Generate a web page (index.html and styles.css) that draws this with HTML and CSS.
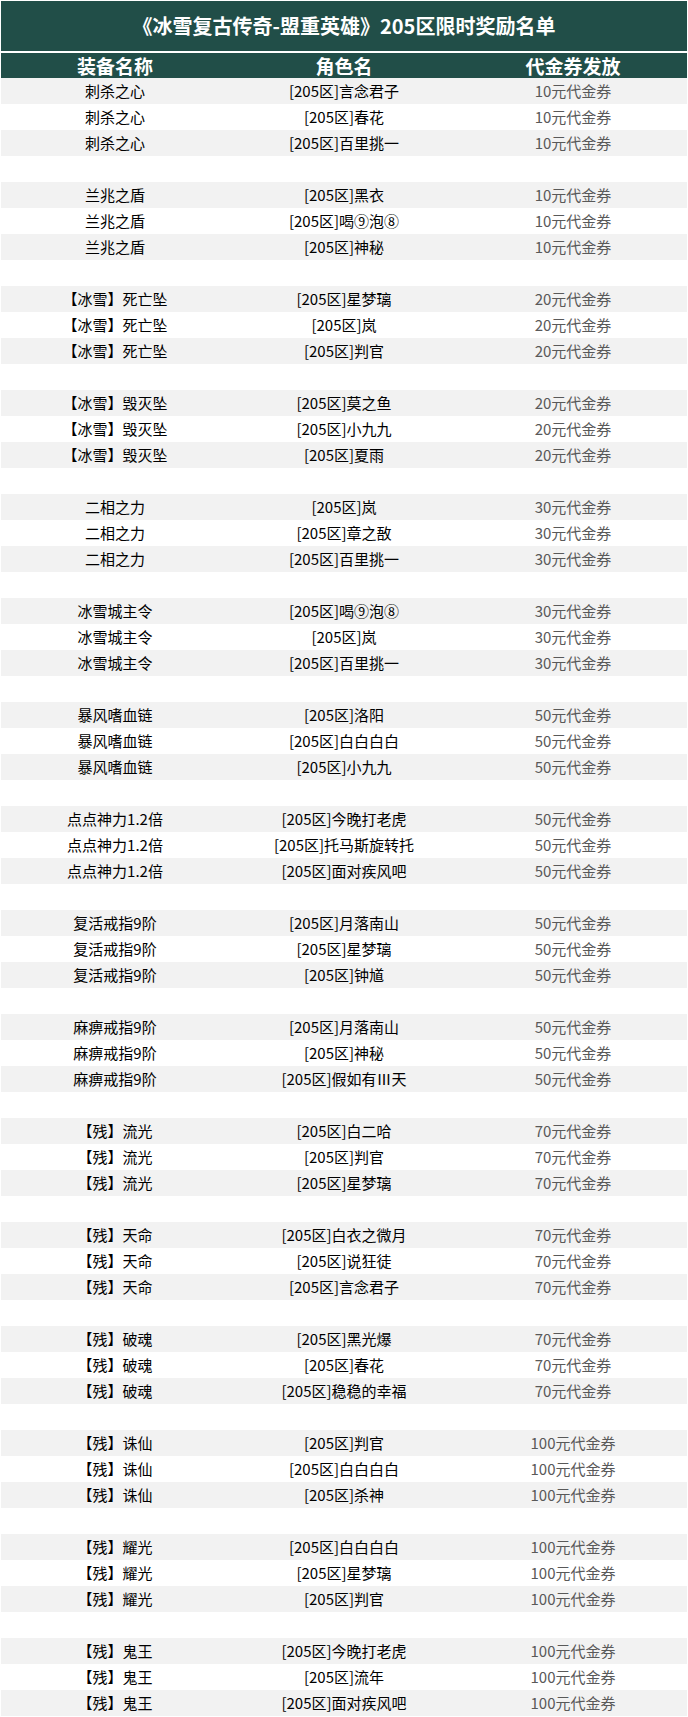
FILE: index.html
```html
<!DOCTYPE html>
<html lang="zh-CN">
<head>
<meta charset="utf-8">
<title>205区限时奖励名单</title>
<link rel="stylesheet" href="styles.css">
</head>
<body>
<div class="sheet">
  <div class="title">《冰雪复古传奇-盟重英雄》205区限时奖励名单</div>
  <table class="list">
    <colgroup><col class="c1"><col class="c2"><col class="c3"></colgroup>
    <thead>
      <tr><th>装备名称</th><th>角色名</th><th>代金券发放</th></tr>
    </thead>
    <tbody>
      <tr><td class="item">刺杀之心</td><td class="role">[205区]言念君子</td><td class="prize">10元代金券</td></tr>
      <tr><td class="item">刺杀之心</td><td class="role">[205区]春花</td><td class="prize">10元代金券</td></tr>
      <tr><td class="item">刺杀之心</td><td class="role">[205区]百里挑一</td><td class="prize">10元代金券</td></tr>
      <tr class="gap"><td colspan="3"></td></tr>
      <tr><td class="item">兰兆之盾</td><td class="role">[205区]黑衣</td><td class="prize">10元代金券</td></tr>
      <tr><td class="item">兰兆之盾</td><td class="role">[205区]喝⑨泡⑧</td><td class="prize">10元代金券</td></tr>
      <tr><td class="item">兰兆之盾</td><td class="role">[205区]神秘</td><td class="prize">10元代金券</td></tr>
      <tr class="gap"><td colspan="3"></td></tr>
      <tr><td class="item">【冰雪】死亡坠</td><td class="role">[205区]星梦璃</td><td class="prize">20元代金券</td></tr>
      <tr><td class="item">【冰雪】死亡坠</td><td class="role">[205区]岚</td><td class="prize">20元代金券</td></tr>
      <tr><td class="item">【冰雪】死亡坠</td><td class="role">[205区]判官</td><td class="prize">20元代金券</td></tr>
      <tr class="gap"><td colspan="3"></td></tr>
      <tr><td class="item">【冰雪】毁灭坠</td><td class="role">[205区]莫之鱼</td><td class="prize">20元代金券</td></tr>
      <tr><td class="item">【冰雪】毁灭坠</td><td class="role">[205区]小九九</td><td class="prize">20元代金券</td></tr>
      <tr><td class="item">【冰雪】毁灭坠</td><td class="role">[205区]夏雨</td><td class="prize">20元代金券</td></tr>
      <tr class="gap"><td colspan="3"></td></tr>
      <tr><td class="item">二相之力</td><td class="role">[205区]岚</td><td class="prize">30元代金券</td></tr>
      <tr><td class="item">二相之力</td><td class="role">[205区]章之敔</td><td class="prize">30元代金券</td></tr>
      <tr><td class="item">二相之力</td><td class="role">[205区]百里挑一</td><td class="prize">30元代金券</td></tr>
      <tr class="gap"><td colspan="3"></td></tr>
      <tr><td class="item">冰雪城主令</td><td class="role">[205区]喝⑨泡⑧</td><td class="prize">30元代金券</td></tr>
      <tr><td class="item">冰雪城主令</td><td class="role">[205区]岚</td><td class="prize">30元代金券</td></tr>
      <tr><td class="item">冰雪城主令</td><td class="role">[205区]百里挑一</td><td class="prize">30元代金券</td></tr>
      <tr class="gap"><td colspan="3"></td></tr>
      <tr><td class="item">暴风嗜血链</td><td class="role">[205区]洛阳</td><td class="prize">50元代金券</td></tr>
      <tr><td class="item">暴风嗜血链</td><td class="role">[205区]白白白白</td><td class="prize">50元代金券</td></tr>
      <tr><td class="item">暴风嗜血链</td><td class="role">[205区]小九九</td><td class="prize">50元代金券</td></tr>
      <tr class="gap"><td colspan="3"></td></tr>
      <tr><td class="item">点点神力1.2倍</td><td class="role">[205区]今晚打老虎</td><td class="prize">50元代金券</td></tr>
      <tr><td class="item">点点神力1.2倍</td><td class="role">[205区]托马斯旋转托</td><td class="prize">50元代金券</td></tr>
      <tr><td class="item">点点神力1.2倍</td><td class="role">[205区]面对疾风吧</td><td class="prize">50元代金券</td></tr>
      <tr class="gap"><td colspan="3"></td></tr>
      <tr><td class="item">复活戒指9阶</td><td class="role">[205区]月落南山</td><td class="prize">50元代金券</td></tr>
      <tr><td class="item">复活戒指9阶</td><td class="role">[205区]星梦璃</td><td class="prize">50元代金券</td></tr>
      <tr><td class="item">复活戒指9阶</td><td class="role">[205区]钟馗</td><td class="prize">50元代金券</td></tr>
      <tr class="gap"><td colspan="3"></td></tr>
      <tr><td class="item">麻痹戒指9阶</td><td class="role">[205区]月落南山</td><td class="prize">50元代金券</td></tr>
      <tr><td class="item">麻痹戒指9阶</td><td class="role">[205区]神秘</td><td class="prize">50元代金券</td></tr>
      <tr><td class="item">麻痹戒指9阶</td><td class="role">[205区]假如有Ⅲ天</td><td class="prize">50元代金券</td></tr>
      <tr class="gap"><td colspan="3"></td></tr>
      <tr><td class="item">【残】流光</td><td class="role">[205区]白二哈</td><td class="prize">70元代金券</td></tr>
      <tr><td class="item">【残】流光</td><td class="role">[205区]判官</td><td class="prize">70元代金券</td></tr>
      <tr><td class="item">【残】流光</td><td class="role">[205区]星梦璃</td><td class="prize">70元代金券</td></tr>
      <tr class="gap"><td colspan="3"></td></tr>
      <tr><td class="item">【残】天命</td><td class="role">[205区]白衣之微月</td><td class="prize">70元代金券</td></tr>
      <tr><td class="item">【残】天命</td><td class="role">[205区]说狂徒</td><td class="prize">70元代金券</td></tr>
      <tr><td class="item">【残】天命</td><td class="role">[205区]言念君子</td><td class="prize">70元代金券</td></tr>
      <tr class="gap"><td colspan="3"></td></tr>
      <tr><td class="item">【残】破魂</td><td class="role">[205区]黑光爆</td><td class="prize">70元代金券</td></tr>
      <tr><td class="item">【残】破魂</td><td class="role">[205区]春花</td><td class="prize">70元代金券</td></tr>
      <tr><td class="item">【残】破魂</td><td class="role">[205区]稳稳的幸福</td><td class="prize">70元代金券</td></tr>
      <tr class="gap"><td colspan="3"></td></tr>
      <tr><td class="item">【残】诛仙</td><td class="role">[205区]判官</td><td class="prize">100元代金券</td></tr>
      <tr><td class="item">【残】诛仙</td><td class="role">[205区]白白白白</td><td class="prize">100元代金券</td></tr>
      <tr><td class="item">【残】诛仙</td><td class="role">[205区]杀神</td><td class="prize">100元代金券</td></tr>
      <tr class="gap"><td colspan="3"></td></tr>
      <tr><td class="item">【残】耀光</td><td class="role">[205区]白白白白</td><td class="prize">100元代金券</td></tr>
      <tr><td class="item">【残】耀光</td><td class="role">[205区]星梦璃</td><td class="prize">100元代金券</td></tr>
      <tr><td class="item">【残】耀光</td><td class="role">[205区]判官</td><td class="prize">100元代金券</td></tr>
      <tr class="gap"><td colspan="3"></td></tr>
      <tr><td class="item">【残】鬼王</td><td class="role">[205区]今晚打老虎</td><td class="prize">100元代金券</td></tr>
      <tr><td class="item">【残】鬼王</td><td class="role">[205区]流年</td><td class="prize">100元代金券</td></tr>
      <tr><td class="item">【残】鬼王</td><td class="role">[205区]面对疾风吧</td><td class="prize">100元代金券</td></tr>
    </tbody>
  </table>
</div>
</body>
</html>
```
FILE: styles.css
```css
html, body {
  margin: 0;
  padding: 0;
  background: #ffffff;
}

body {
  font-family: "Noto Sans CJK SC", "Noto Sans", sans-serif;
}

.sheet {
  width: 686px;
  padding: 1px 1px 0 1px;
}

.title {
  height: 50px;
  background: #214e48;
  color: #ffffff;
  font-size: 20px;
  font-weight: 700;
  line-height: 50px;
  text-align: center;
  letter-spacing: 0;
}

.list {
  width: 686px;
  margin-top: 2px;
  border-collapse: collapse;
  border-spacing: 0;
  table-layout: fixed;
}

.list .c1 { width: 228px; }
.list .c2 { width: 230px; }
.list .c3 { width: 228px; }

.list th {
  height: 25px;
  padding: 0;
  background: #214e48;
  color: #ffffff;
  font-size: 19px;
  font-weight: 700;
  line-height: 25px;
  text-align: center;
}

.list td {
  height: 26px;
  padding: 0;
  text-align: center;
  vertical-align: middle;
  line-height: 26px;
  white-space: nowrap;
}

.list tbody tr:nth-child(odd) {
  background: #f2f2f2;
}

.list tbody tr:nth-child(even) {
  background: #ffffff;
}

.item,
.role {
  color: #000000;
  font-size: 15px;
  padding-top: 2px;
}

.prize {
  color: #595959;
  font-size: 15px;
}
```
